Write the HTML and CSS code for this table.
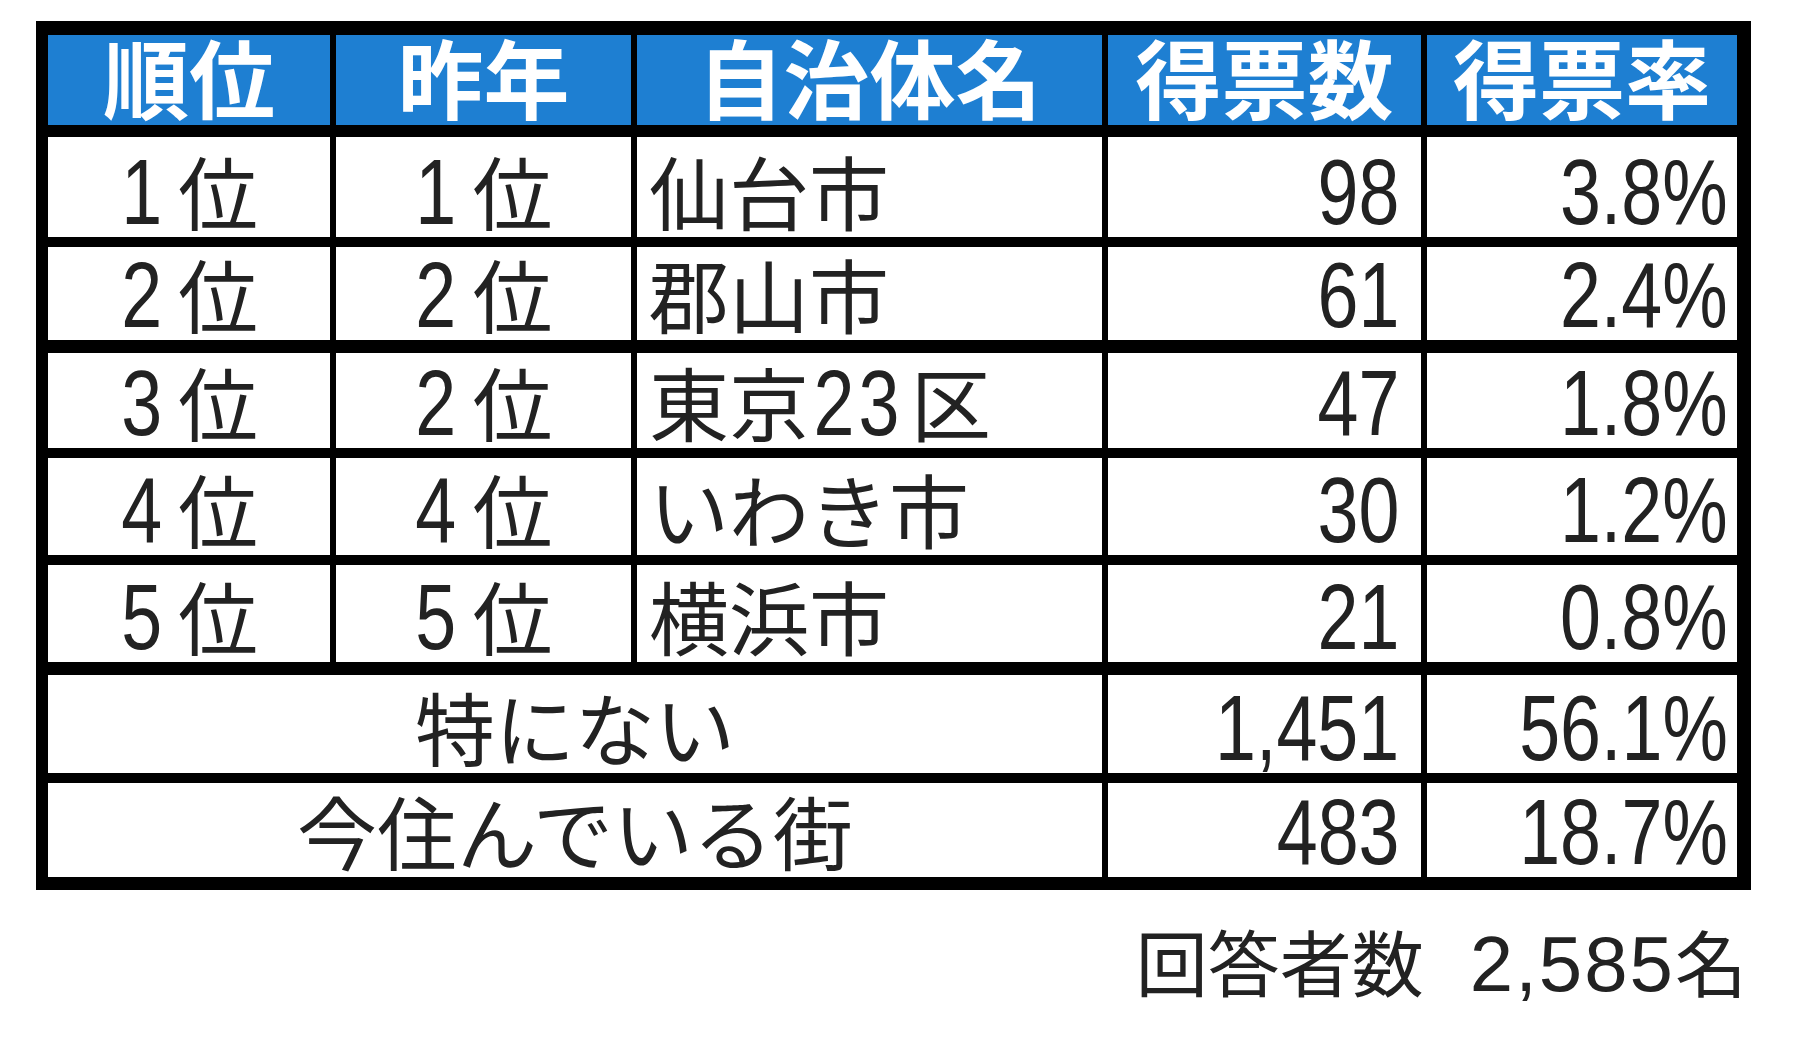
FILE: index.html
```html
<!DOCTYPE html>
<html lang="ja">
<head>
<meta charset="utf-8">
<title>住みたい自治体ランキング</title>
<link rel="stylesheet" href="styles.css">
</head>
<body>
<div class="page">
  <div class="wrap">
    <div class="sheet">
      <div class="row head">
        <div class="cell c1">順位</div>
        <div class="cell c2">昨年</div>
        <div class="cell c3">自治体名</div>
        <div class="cell c4">得票数</div>
        <div class="cell c5">得票率</div>
      </div>
      <div class="row r1">
        <div class="cell c1"><span class="t"><span class="d">1</span>位</span></div>
        <div class="cell c2"><span class="t"><span class="d">1</span>位</span></div>
        <div class="cell c3">仙台市</div>
        <div class="cell c4 num"><span class="n">98</span></div>
        <div class="cell c5 num"><span class="n">3.8%</span></div>
      </div>
      <div class="row r2">
        <div class="cell c1"><span class="t"><span class="d">2</span>位</span></div>
        <div class="cell c2"><span class="t"><span class="d">2</span>位</span></div>
        <div class="cell c3">郡山市</div>
        <div class="cell c4 num"><span class="n">61</span></div>
        <div class="cell c5 num"><span class="n">2.4%</span></div>
      </div>
      <div class="row r3 thick">
        <div class="cell c1"><span class="t"><span class="d">3</span>位</span></div>
        <div class="cell c2"><span class="t"><span class="d">2</span>位</span></div>
        <div class="cell c3"><span class="t">東京<span class="d d2">23</span>区</span></div>
        <div class="cell c4 num"><span class="n">47</span></div>
        <div class="cell c5 num"><span class="n">1.8%</span></div>
      </div>
      <div class="row r4">
        <div class="cell c1"><span class="t"><span class="d">4</span>位</span></div>
        <div class="cell c2"><span class="t"><span class="d">4</span>位</span></div>
        <div class="cell c3">いわき市</div>
        <div class="cell c4 num"><span class="n">30</span></div>
        <div class="cell c5 num"><span class="n">1.2%</span></div>
      </div>
      <div class="row r5">
        <div class="cell c1"><span class="t"><span class="d">5</span>位</span></div>
        <div class="cell c2"><span class="t"><span class="d">5</span>位</span></div>
        <div class="cell c3">横浜市</div>
        <div class="cell c4 num"><span class="n">21</span></div>
        <div class="cell c5 num"><span class="n">0.8%</span></div>
      </div>
      <div class="row r6 thick">
        <div class="cell cm">特にない</div>
        <div class="cell c4 num"><span class="n">1,451</span></div>
        <div class="cell c5 num"><span class="n">56.1%</span></div>
      </div>
      <div class="row r7">
        <div class="cell cm">今住んでいる街</div>
        <div class="cell c4 num"><span class="n">483</span></div>
        <div class="cell c5 num"><span class="n">18.7%</span></div>
      </div>
    </div>
    <div class="footer">
      <span>回答者数</span><span class="total"><span class="fn">2,585</span>名</span>
    </div>
  </div>
</div>
</body>
</html>
```
FILE: styles.css
```css
html, body {
  margin: 0;
  padding: 0;
  background: #ffffff;
}

body {
  font-family: "Noto Sans CJK JP", "Noto Sans", sans-serif;
  color: #222222;
}

.page {
  padding: 21px 0 0 36px;
}

.wrap {
  width: max-content;
}

/* table frame: black background shows through the gaps as grid lines */
.sheet {
  display: flex;
  flex-direction: column;
  background: #000000;
  padding: 14px 14px 13px 12px;
}

.row {
  display: flex;
  gap: 6px;
}

.row + .row {
  margin-top: 10px;
}

.row.head + .row {
  margin-top: 12px;
}

.row.thick {
  margin-top: 13px;
}

.head { height: 90px; }
.r1 { height: 100px; }
.r2 { height: 93px; }
.r3 { height: 95px; }
.r4 { height: 97px; }
.r5 { height: 97px; }
.r6 { height: 98px; }
.r7 { height: 94px; }

.cell {
  box-sizing: border-box;
  height: 100%;
  background: #ffffff;
  display: flex;
  align-items: flex-end;
  justify-content: center;
  font-size: 80px;
  line-height: 80px;
  padding-bottom: 8px;
  white-space: nowrap;
}

.t {
  display: block;
  white-space: nowrap;
}

.head .cell {
  background: #1e7fd2;
  color: #ffffff;
  font-weight: 700;
  font-size: 86px;
  line-height: 86px;
  padding-bottom: 6px;
  justify-content: center;
}

.c1 { width: 282px; }
.c2 { width: 295px; }
.c3 { width: 465px; justify-content: flex-start; padding-left: 12px; }
.c4 { width: 313px; justify-content: flex-end; padding-right: 22px; }
.c5 { width: 310px; justify-content: flex-end; padding-right: 9px; }
.cm { width: 1054px; }

.head .c3,
.head .c4,
.head .c5 {
  justify-content: center;
  padding-left: 0;
  padding-right: 0;
}

/* condensed digits (the original sheet uses a narrow gothic) */
.d {
  display: inline-block;
  font-family: "Liberation Sans", sans-serif;
  font-size: 92px;
  line-height: 40px;
  transform: scaleX(0.8);
  transform-origin: right center;
  margin-left: -0.1em;
  margin-right: 16px;
}

.c3 .d {
  margin-left: -0.2em;
  margin-right: 8px;
}

.c3 .d2 {
  letter-spacing: 5px;
}

.num {
  font-family: "Liberation Sans", sans-serif;
  font-size: 92px;
  line-height: 80px;
  padding-bottom: 5px;
}

.n {
  display: inline-block;
  transform: scaleX(0.8);
  transform-origin: right center;
}

.footer {
  display: flex;
  justify-content: flex-end;
  align-items: baseline;
  gap: 46px;
  margin-top: 34px;
  padding-right: 4px;
  font-size: 72px;
  line-height: 1;
  color: #222222;
}

.fn {
  font-family: "Liberation Sans", sans-serif;
  font-size: 78px;
  letter-spacing: 2px;
}
```
